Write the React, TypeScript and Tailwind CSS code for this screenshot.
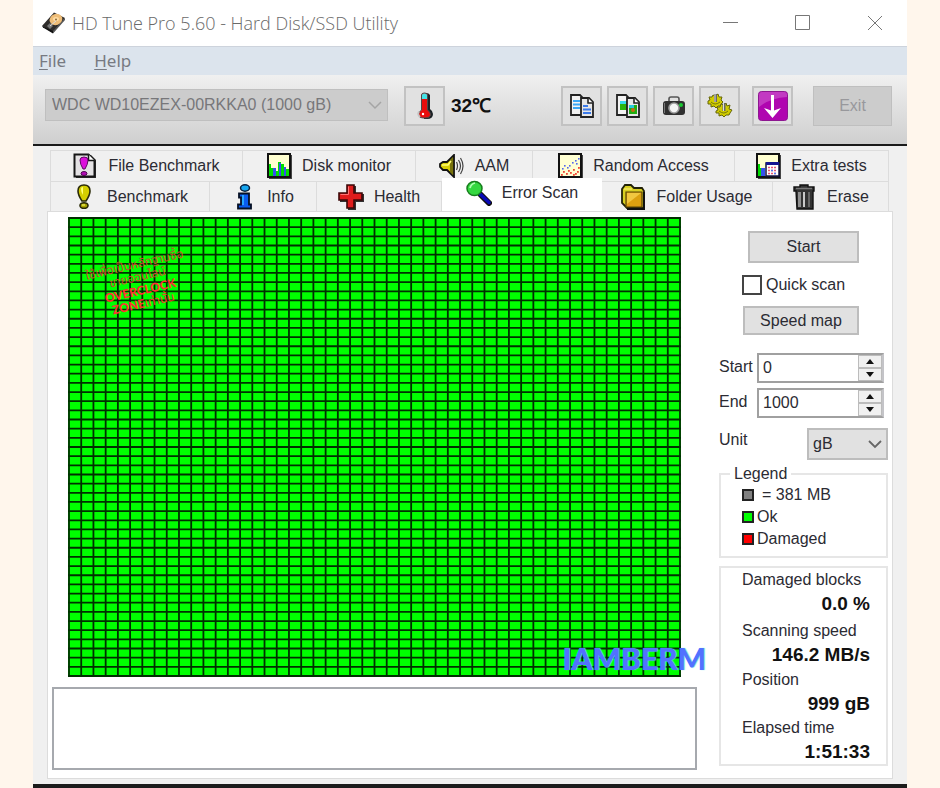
import React from "react";

const ui = "font-['Liberation_Sans',Arial,sans-serif]";
const BLOCKS = 50;

function DiskIcon() {
  return (
    <svg width="24" height="22" viewBox="0 0 24 22" aria-hidden="true">
      <path d="M0 14 12 0.5 23 6 11 21Z" fill="#2e2c2b" />
      <path d="M0 14 11 19 11 21.500 1 15.500Z" fill="#111" />
      <path d="M11 19 23 6 23 8 11 21.500Z" fill="#555" />
      <ellipse cx="14" cy="7.500" rx="6.500" ry="5.500" fill="#eebd78" transform="rotate(-20 14 7.500)" />
      <ellipse cx="14" cy="7" rx="3" ry="2" fill="#ffdca3" />
      <circle cx="14" cy="7.500" r="1" fill="#8b6a3c" />
      <path d="m5 14 3-3 3 3-3 3Z" fill="#777" />
      <path d="m8 14 6-5" stroke="#ddd" strokeWidth="1" />
    </svg>
  );
}

function ThermometerIcon() {
  return (
    <svg width="18" height="28" viewBox="0 0 18 28" aria-hidden="true">
      <path d="M7 3q0-2 3-2t4 2v14q3 2 3 5 0 5-6 5H8Z" fill="#1c2226" />
      <path d="M5.500 3q0-2 3-2t3 2v15q3 2 3 4.500 0 3.500-6 3.500t-6-3.500q0-2.500 3-4.500Z" fill="#e80c0c" stroke="#4a4a4a" strokeWidth="1" />
      <path d="M6 3q0-1.500 2.500-1.500T11 3v4H6Z" fill="#45e3e6" />
      <path d="M3 19.500q-2 3 1 5.500" stroke="#c4c4c4" strokeWidth="1.800" fill="none" />
      <circle cx="7" cy="22" r="1.200" fill="#fff" />
    </svg>
  );
}

function Pages({ picture }: { picture?: boolean }) {
  return (
    <svg width="26" height="26" viewBox="0 0 26 26" aria-hidden="true">
      <path d="M2 2h9l3 3v17H2Z" fill="#f2f2f2" stroke="#222" strokeWidth="1.800" />
      {picture ? (
        <path d="M5 8h8v9H5Z" fill="#28b50e" />
      ) : (
        <path d="M4 8h7M4 11.500h7M4 15h7" stroke="#3ba7f5" strokeWidth="1.800" />
      )}
      {picture && <path d="M5 8h6v3H5Z" fill="#35d9ec" />}
      <path d="M12 5h8l4 4v15H12Z" fill="#e7e7e7" stroke="#222" strokeWidth="1.800" />
      <path d="M19 5v5h5" fill="#fff" stroke="#222" strokeWidth="1.600" />
      {picture ? (
        <>
          <path d="M14 12h8v9h-8Z" fill="#1fae12" />
          <path d="M14 12h5v3h-5Z" fill="#28c9dc" />
          <circle cx="18" cy="17" r="2" fill="#c86a12" />
        </>
      ) : (
        <path d="M14 13h5M14 16.500h8M14 20h8" stroke="#3c7bea" strokeWidth="1.800" />
      )}
    </svg>
  );
}

function CameraIcon() {
  return (
    <svg width="24" height="20" viewBox="0 0 24 20" aria-hidden="true">
      <path d="M7 6V3q0-2 2-2h6q2 0 2 2v3" fill="none" stroke="#555" strokeWidth="1.600" />
      <rect x="1" y="5" width="22" height="14" rx="3" fill="#303030" />
      <circle cx="12" cy="12" r="5.800" fill="#9b9b9b" />
      <circle cx="12" cy="12" r="4.200" fill="#f4f4f4" />
      <circle cx="19" cy="9" r="2" fill="#19c832" />
      <path d="M2.500 7v10" stroke="#777" />
    </svg>
  );
}

function GearsIcon() {
  return (
    <svg width="26" height="26" viewBox="0 0 26 26" aria-hidden="true">
      <g stroke="#66660a" strokeWidth="1" fill="#d0cc00">
        <path d="M1 8 3 7 2 4 5 4 6 2 8 3 11 1 12 4 15 4 14 7 16 9 14 11 14 13 11 13 9 15 7 13 4 14 4 11 1 11Z" />
        <path d="M9 18 11 17 10 14 13 14 14 11 17 12 19 10 20 13 23 12 22 16 25 17 23 20 22 22 19 22 17 24 15 22 12 23 12 20 9 20Z" />
      </g>
      <path d="M8.500 1v8M17 10v8" stroke="#666" strokeWidth="3" />
      <path d="M8 1v8M16.500 10v8" stroke="#ddd" strokeWidth="1" />
      <path d="M4 9q4 4 9 0M12 18q5 4 9 0" stroke="#77770b" fill="none" />
    </svg>
  );
}

function DownIcon() {
  return (
    <svg width="30" height="30" viewBox="0 0 30 30" aria-hidden="true">
      <rect x="0.500" y="0.500" width="29" height="29" rx="3" fill="#b005b0" stroke="#8d1790" />
      <path d="M1 4q0-3 3-3h22q3 0 3 3v2Q12 7 1 16Z" fill="#cf5ccf" opacity=".6" />
      <path d="M14.500 4v19" stroke="#fff" strokeWidth="3" />
      <path d="m6 17 8.500 10L23 17l-8.500 3Z" fill="#fff" />
    </svg>
  );
}

function FileBenchIcon() {
  return (
    <svg width="25" height="26" viewBox="0 0 25 26" aria-hidden="true">
      <path d="M2 2h16l5 5v18H3Z" fill="#333" />
      <path d="M1.500 1.500h14l6 6v16h-20Z" fill="#e4e2e4" stroke="#161616" strokeWidth="2" />
      <path d="M15.500 1.500v6h6" fill="#fff" stroke="#161616" strokeWidth="1.500" />
      <path d="M7 7q0-3 4-3t4 3q0 4-3 9h-2Q7 11 7 7Z" fill="#dc0edc" stroke="#5d0860" />
      <ellipse cx="11" cy="20.500" rx="3" ry="2" fill="#b10cb4" stroke="#4d064e" />
    </svg>
  );
}

function DiskMonitorIcon() {
  return (
    <svg width="25" height="26" viewBox="0 0 25 26" aria-hidden="true">
      <path d="M2 2h23v24H2Z" fill="#444" />
      <path d="M1 1h22v23H1Z" fill="#ffffd0" stroke="#111" strokeWidth="2" />
      <path d="M2 11h2v4h2v8H2Z" fill="#00e000" />
      <path d="M6 15h3v8H6Z" fill="#3552ec" />
      <path d="M9 18h2V9h3v14H9Z" fill="#00e000" />
      <path d="M12 10h2v13h-2ZM17 14h2v9h-2Z" fill="#3552ec" />
      <path d="M14 11h3v12h-3ZM19 16h3v7h-3Z" fill="#00e000" />
    </svg>
  );
}

function SpeakerIcon() {
  return (
    <svg width="26" height="24" viewBox="0 0 26 24" aria-hidden="true">
      <path d="M1 10 4 8h4l7-7v22l-7-7H4l-3-3Z" fill="#d8cf05" stroke="#111" strokeWidth="1.800" />
      <path d="m11 6 3-3v18l-3-3Z" fill="#77720c" />
      <path d="M3 11h6l3-4" stroke="#ffff7a" strokeWidth="1.500" fill="none" />
      <path d="M17.500 8q2 4 0 8M19.500 6q4 6 0 12M21.500 4q5 8 0 16" fill="none" stroke="#444" strokeWidth="1.200" />
    </svg>
  );
}

const dots = [[4, 15], [6, 12], [9, 14], [14, 9], [17, 7], [18, 10], [11, 12], [20, 5]];
const redDots = [[3, 21], [5, 18], [8, 20], [10, 17], [12, 19], [15, 16], [17, 20], [19, 18], [20, 14], [15, 21]];

function ScatterIcon() {
  return (
    <svg width="25" height="26" viewBox="0 0 25 26" aria-hidden="true">
      <path d="M2 2h23v24H2Z" fill="#444" />
      <path d="M1 1h22v23H1Z" fill="#ffffd2" stroke="#111" strokeWidth="2" />
      {dots.map(([x, y]) => <rect key={`${x}-${y}`} x={x} y={y} width="1.600" height="1.600" fill="#5266ee" />)}
      {redDots.map(([x, y]) => <rect key={`${x}-${y}`} x={x} y={y} width="1.800" height="1.800" fill="#f04535" />)}
    </svg>
  );
}

function ExtraIcon() {
  return (
    <svg width="25" height="26" viewBox="0 0 25 26" aria-hidden="true">
      <path d="M2 2h23v24H2Z" fill="#444" />
      <path d="M1 1h22v23H1Z" fill="#ffffd0" stroke="#111" strokeWidth="2" />
      <path d="M2 11h2v4h2v8H2Z" fill="#00dc00" />
      <path d="M5 15h4v8H5Z" fill="#3552ec" />
      <path d="M10 10h13v13H10Z" fill="#fff" stroke="#151540" strokeWidth="1.500" />
      <path d="M10 9h13v3H10Z" fill="#151590" />
      <path d="M12 14.500h9M12 17.500h9M12 20.500h9" stroke="#e85575" strokeWidth="1.600" strokeDasharray="2 1" />
      <path d="M15 17.500h2M18 20.500h2" stroke="#5577ee" strokeWidth="1.600" />
    </svg>
  );
}

function BulbIcon() {
  return (
    <svg width="25" height="26" viewBox="0 0 25 26" aria-hidden="true">
      <path d="M6 7q0-6 6-6t6 6q0 4-4 10h-4Q6 11 6 7Z" fill="#d4cf00" stroke="#2a2a08" strokeWidth="1.600" />
      <path d="M9 5q0-2 2-2v8q-2-3-2-6Z" fill="#ffff79" />
      <ellipse cx="12" cy="21.500" rx="4" ry="2.800" fill="#a9a500" stroke="#2a2a08" strokeWidth="1.600" />
      <path d="M10 21h3" stroke="#ffff79" />
    </svg>
  );
}

function InfoIcon() {
  return (
    <svg width="25" height="26" viewBox="0 0 25 26" aria-hidden="true">
      <ellipse cx="13" cy="4" rx="4.500" ry="3.200" fill="#16a6ef" stroke="#0a2040" strokeWidth="1.500" />
      <path d="M7 9.500h10v11h2v4H6v-4h3v-7H7Z" fill="#0a5cf0" stroke="#061024" strokeWidth="1.800" />
      <path d="M11 11v10" stroke="#27a7ff" strokeWidth="2" />
    </svg>
  );
}

function HealthIcon() {
  return (
    <svg width="26" height="26" viewBox="0 0 26 26" aria-hidden="true">
      <path d="M10 2h8v8h8v8h-8v8h-8v-8H2v-8h8Z" fill="#333" />
      <path d="M9 1h7v8h8v7h-8v8H9v-8H1V9h8Z" fill="#e01c1c" stroke="#3b0808" strokeWidth="1.600" />
      <path d="M10.500 2.500v8h-8" fill="none" stroke="#ff7474" />
    </svg>
  );
}

function SearchIcon() {
  return (
    <svg width="26" height="26" viewBox="0 0 26 26" aria-hidden="true">
      <path d="m15 15 8 8" stroke="#111" strokeWidth="6" strokeLinecap="round" />
      <path d="m14 14 9 8.500" stroke="#0909b8" strokeWidth="3.500" strokeLinecap="round" />
      <ellipse cx="8.500" cy="8.500" rx="7.500" ry="7" fill="#35d840" stroke="#167c1c" strokeWidth="1.500" />
      <path d="M4 8q1-4 5-5" fill="none" stroke="#adffb0" strokeWidth="1.800" />
    </svg>
  );
}

function FolderIcon() {
  return (
    <svg width="25" height="26" viewBox="0 0 25 26" aria-hidden="true">
      <path d="M1 5 4 1h6l3 3h8l2 3v17H6l-5-5Z" fill="#d8cf22" stroke="#222208" strokeWidth="1.800" />
      <path d="M5 8h16v15H5Z" fill="#dba010" stroke="#58450a" strokeWidth="1.200" />
      <path d="M6 9h14L6 20Z" fill="#f1c740" />
      <path d="M3 5h8" stroke="#fff07b" />
      <path d="M23 8v17H6" fill="none" stroke="#111" strokeWidth="2" />
    </svg>
  );
}

function TrashIcon() {
  return (
    <svg width="25" height="26" viewBox="0 0 25 26" aria-hidden="true">
      <path d="M8 3V1h8v2h6v4h-1v18H5L4 7H2V3Z" fill="#333" stroke="#111" strokeWidth="1.400" />
      <path d="M6 8h3v15H6Z" fill="#909090" />
      <path d="M11 8h2v15h-2Z" fill="#c9c9c9" />
      <path d="M16 8h2v15h-2Z" fill="#666" />
      <path d="M4 4.500h16" stroke="#777" strokeWidth="1.500" />
    </svg>
  );
}

type TabItem = { label: string; icon: React.ReactNode; active?: boolean };

const topTabs: TabItem[] = [
  { label: "File Benchmark", icon: <FileBenchIcon /> },
  { label: "Disk monitor", icon: <DiskMonitorIcon /> },
  { label: "AAM", icon: <SpeakerIcon /> },
  { label: "Random Access", icon: <ScatterIcon /> },
  { label: "Extra tests", icon: <ExtraIcon /> },
];

const bottomTabs: TabItem[] = [
  { label: "Benchmark", icon: <BulbIcon /> },
  { label: "Info", icon: <InfoIcon /> },
  { label: "Health", icon: <HealthIcon /> },
  { label: "Error Scan", icon: <SearchIcon />, active: true },
  { label: "Folder Usage", icon: <FolderIcon /> },
  { label: "Erase", icon: <TrashIcon /> },
];

function Tab({ label, icon, active }: TabItem) {
  return (
    <button
      role="tab"
      aria-selected={!!active}
      className={
        active
          ? "-mt-[3px] -mb-px flex items-center justify-center gap-2.5 bg-white pb-1 whitespace-nowrap"
          : "flex items-center justify-center gap-2.5 border-t border-r border-[#dcdcdc] whitespace-nowrap"
      }
    >
      {icon}
      {label}
    </button>
  );
}

function ToolButton({ label, children }: { label: string; children: React.ReactNode }) {
  return (
    <button
      aria-label={label}
      className="flex h-10 w-[41px] shrink-0 items-center justify-center border-2 border-[#c2c2c2] bg-[#e1e1e1]"
    >
      {children}
    </button>
  );
}

function BlockMap() {
  const lines = Array.from({ length: BLOCKS + 1 }, (_, i) => i);
  return (
    <svg
      className="block h-[460px] w-full"
      viewBox="0 0 613 460"
      preserveAspectRatio="none"
      role="img"
      aria-label="Scanned blocks"
    >
      <rect width="613" height="460" fill="#00ff00" />
      <g stroke="#003000" strokeWidth="1.800">
        {lines.map((i) => (
          <path key={`c${i}`} d={`M${1 + (i * 611) / BLOCKS} 0V460`} />
        ))}
        {lines.map((i) => (
          <path key={`r${i}`} d={`M0 ${1 + (i * 458) / BLOCKS}H613`} />
        ))}
      </g>
    </svg>
  );
}

function Spinner({ id, label, value }: { id: string; label: string; value: string }) {
  return (
    <div className="flex h-[30px] items-start">
      <label htmlFor={id} className="w-[38px] leading-7">{label}</label>
      <div className="mr-1 flex h-full min-w-0 flex-1 border-2 border-[#a0a0a0] border-r-[#c4c4c8]">
        <input id={id} type="text" defaultValue={value} className="min-w-0 flex-1 bg-white px-1 outline-none" />
        <div className="flex w-6 flex-col gap-0.5 bg-[#bcbcbc] p-px">
          <button aria-label={`Increase ${label}`} className="flex flex-1 items-center justify-center bg-[#f0f0f0]">
            <svg width="8" height="5" viewBox="0 0 8 5"><path d="M0 5 4 0l4 5Z" fill="#111" /></svg>
          </button>
          <button aria-label={`Decrease ${label}`} className="flex flex-1 items-center justify-center bg-[#f0f0f0]">
            <svg width="8" height="5" viewBox="0 0 8 5"><path d="M0 0h8L4 5Z" fill="#111" /></svg>
          </button>
        </div>
      </div>
    </div>
  );
}

function Stat({ label, value }: { label: string; value: string }) {
  return (
    <div>
      <dt className="leading-6">{label}</dt>
      <dd className="pr-4 text-right text-[19px] leading-6 font-bold text-[#111]">{value}</dd>
    </div>
  );
}

const legend = [
  { text: "= 381 MB", swatch: "bg-[#808080]", gap: "gap-2" },
  { text: "Ok", swatch: "bg-[#00ff00]", gap: "gap-[3px]" },
  { text: "Damaged", swatch: "bg-[#ff0000]", gap: "gap-[3px]" },
];

export default function App() {
  return (
    <div className="min-h-screen bg-[#fff6ec] px-[33px]">
      <div className={`flex min-h-screen flex-col bg-[#f0f0f0] text-[16px] text-[#2b2b33] ${ui}`}>
        <header className="flex h-[46px] items-center bg-white pr-6 pl-[9px]">
          <DiskIcon />
          <h1 className="ml-1.5 flex-1 font-['Open_Sans','Noto_Sans',sans-serif] text-[18px] font-light text-[#6a6a6a]">
            HD Tune Pro 5.60 - Hard Disk/SSD Utility
          </h1>
          <div className="flex items-center gap-14 text-[#777]">
            <button aria-label="Minimize">
              <svg width="16" height="16" viewBox="0 0 16 16"><path d="M0 7.500h15" stroke="currentColor" /></svg>
            </button>
            <button aria-label="Maximize">
              <svg width="16" height="16" viewBox="0 0 16 16"><path d="M.5.500h14v14H.5Z" fill="none" stroke="currentColor" /></svg>
            </button>
            <button aria-label="Close">
              <svg width="16" height="16" viewBox="0 0 16 16"><path d="m1 1 14 14M15 1 1 15" stroke="currentColor" /></svg>
            </button>
          </div>
        </header>

        <nav className="flex h-[29px] items-center gap-7 border-t border-[#cdd3dc] bg-[#dce4ed] px-1.5 font-['Noto_Sans','Open_Sans',sans-serif] text-[17px] text-[#777a82]">
          <button><u className="underline-offset-2">F</u>ile</button>
          <button><u className="underline-offset-2">H</u>elp</button>
        </nav>

        <div className="flex h-[71px] items-start border-b-2 border-[#1a1a1a] bg-linear-to-b from-[#f0f0f0] to-[#cfcfcf] pt-[11px] pr-[15px] pl-3">
          <div className="relative mt-[3px] w-[343px] text-[#77777a]">
            <select
              aria-label="Drive"
              disabled
              className="h-8 w-full appearance-none border border-[#bfbfbf] bg-[#cccccc] px-[6px] opacity-100"
            >
              <option>WDC WD10EZEX-00RKKA0 (1000 gB)</option>
            </select>
            <svg className="pointer-events-none absolute top-3 right-1.5" width="14" height="9" viewBox="0 0 14 9">
              <path d="m1 1 6 6 6-6" fill="none" stroke="#a5a5a5" strokeWidth="1.500" />
            </svg>
          </div>
          <div className="ml-4 flex items-center gap-1.5">
            <ToolButton label="Temperature"><ThermometerIcon /></ToolButton>
            <span className="text-[19px] font-bold text-[#111]">32℃</span>
          </div>
          <div className="ml-auto flex gap-[5px]">
            <ToolButton label="Copy text"><Pages /></ToolButton>
            <ToolButton label="Copy picture"><Pages picture /></ToolButton>
            <ToolButton label="Screenshot"><CameraIcon /></ToolButton>
            <ToolButton label="Options"><GearsIcon /></ToolButton>
          </div>
          <div className="ml-3 flex gap-5">
            <ToolButton label="Minimize to tray"><DownIcon /></ToolButton>
            <button disabled className="h-10 w-[79px] border border-[#bfbfbf] bg-[#cccccc] text-[#98989c]">Exit</button>
          </div>
        </div>

        <main className="flex flex-col px-3.5 pt-1 pb-[5px]">
          <div role="tablist" className="mr-1 ml-[3px] border-l border-[#dcdcdc]">
            <div className="grid h-[31px] grid-cols-[192fr_173fr_117fr_202fr_154fr]">
              {topTabs.map((t) => <Tab key={t.label} {...t} />)}
            </div>
            <div className="grid h-[30px] grid-cols-[159fr_107fr_125fr_160fr_171fr_116fr]">
              {bottomTabs.map((t) => <Tab key={t.label} {...t} />)}
            </div>
          </div>

          <div className="flex border border-[#dcdcdc] bg-white pt-[5px] pr-1 pb-2 pl-1">
            <div className="min-w-0 flex-1">
              <div className="relative mx-4">
                <BlockMap />
                <div className="absolute top-[41px] left-[21px] -rotate-[13deg] text-center text-[12px] leading-[13px] whitespace-nowrap text-[#ff3131] font-['Noto_Sans_Thai','Noto_Sans',sans-serif]">
                  <p className="text-[#c94a30]">ใช้เพื่อเป็นหลักฐานซื้อ</p>
                  <p className="text-[#c94a30]">ขายออนไลน์</p>
                  <p className="font-['Lato'] font-black">OVERCLOCK</p>
                  <p><b className="font-['Lato'] font-black">ZONE</b>เท่านั้น</p>
                </div>
                <p className="absolute -right-[25px] bottom-[3px] font-['Lato'] text-[30px] leading-8 font-black text-[#5271ff] [text-shadow:1px_0_1px_#5ce1e6]">
                  IAMBERM
                </p>
              </div>
              <textarea
                aria-label="Scan log"
                readOnly
                className="mt-2.5 block h-[83px] w-full resize-none border-2 border-[#a6a9ae] bg-white outline-none"
              />
            </div>

            <aside className="ml-[22px] flex w-[169px] shrink-0 flex-col pt-3.5">
              <button className="ml-[29px] h-8 w-[111px] border-2 border-[#bdbdbd] bg-[#e1e1e1]">Start</button>
              <label className="mt-3 ml-[23px] flex h-5 items-center gap-1">
                <input type="checkbox" className="size-5 appearance-none border-2 border-[#444] bg-white" />
                Quick scan
              </label>
              <button className="mt-[11px] ml-6 h-[29px] w-[116px] border-2 border-[#bdbdbd] bg-[#e1e1e1]">Speed map</button>
              <div className="mt-[18px] flex flex-col gap-[5px]">
                <Spinner id="start" label="Start" value="0" />
                <Spinner id="end" label="End" value="1000" />
              </div>
              <div className="mt-2.5 flex items-start justify-between">
                <label htmlFor="unit" className="leading-6">Unit</label>
                <div className="relative">
                  <select id="unit" className="h-8 w-[81px] appearance-none border-2 border-[#bdbdbd] bg-[#e1e1e1] px-1">
                    <option>gB</option>
                  </select>
                  <svg className="pointer-events-none absolute top-3 right-1.5" width="14" height="9" viewBox="0 0 14 9">
                    <path d="m1 1 6 6 6-6" fill="none" stroke="#666" strokeWidth="1.800" />
                  </svg>
                </div>
              </div>
              <fieldset className="mt-1 border-2 border-[#e6e6e6] pb-1.5 pl-[21px]">
                <legend className="-ml-3 px-1 leading-5">Legend</legend>
                {legend.map((l) => (
                  <div key={l.text} className={`flex h-[22px] items-center ${l.gap}`}>
                    <span className={`size-3 border-2 border-[#222] ${l.swatch}`} />
                    {l.text}
                  </div>
                ))}
              </fieldset>
              <dl className="mt-2 grid h-[200px] grid-rows-[53fr_51fr_47fr_45fr] border-2 border-[#e6e6e6] pl-[21px]">
                <Stat label="Damaged blocks" value="0.0 %" />
                <Stat label="Scanning speed" value="146.2 MB/s" />
                <Stat label="Position" value="999 gB" />
                <Stat label="Elapsed time" value="1:51:33" />
              </dl>
            </aside>
          </div>
        </main>
        <footer className="min-h-[5px] flex-1 bg-[#1c1c1c]" />
      </div>
    </div>
  );
}
